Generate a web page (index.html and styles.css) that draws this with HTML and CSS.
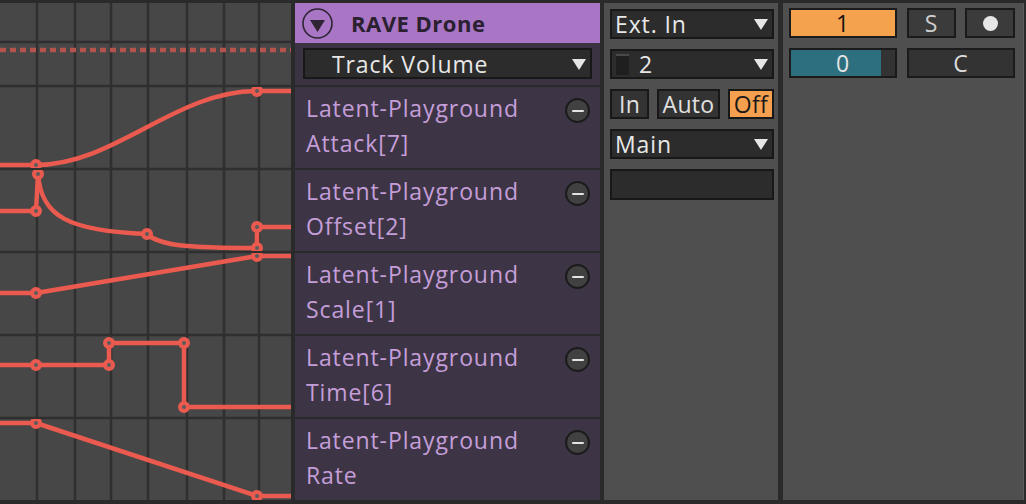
FILE: index.html
```html
<!DOCTYPE html>
<html>
<head>
<meta charset="utf-8">
<link rel="stylesheet" href="styles.css">
</head>
<body>
<div class="app">
  <div class="arrange">
    <svg class="automation" viewBox="0 3 291 497" width="291" height="497">
      <defs>
        <clipPath id="c1"><rect x="0" y="87" width="291" height="81"/></clipPath>
        <clipPath id="c2"><rect x="0" y="170" width="291" height="81"/></clipPath>
        <clipPath id="c3"><rect x="0" y="253" width="291" height="81"/></clipPath>
        <clipPath id="c4"><rect x="0" y="336" width="291" height="81"/></clipPath>
        <clipPath id="c5"><rect x="0" y="419" width="291" height="81"/></clipPath>
      </defs>
      <rect x="0" y="3" width="291" height="497" fill="#474747"/>
      <g class="gridlines">
        <line x1="37" y1="3" x2="37" y2="500"/>
        <line x1="75" y1="3" x2="75" y2="500"/>
        <line x1="111" y1="3" x2="111" y2="500"/>
        <line x1="148" y1="3" x2="148" y2="500"/>
        <line x1="187" y1="3" x2="187" y2="500"/>
        <line x1="224" y1="3" x2="224" y2="500"/>
        <line x1="259" y1="3" x2="259" y2="500"/>
        <line x1="0" y1="42" x2="291" y2="42"/>
        <line x1="0" y1="86" x2="291" y2="86"/>
        <line x1="0" y1="169" x2="291" y2="169"/>
        <line x1="0" y1="252" x2="291" y2="252"/>
        <line x1="0" y1="335" x2="291" y2="335"/>
        <line x1="0" y1="418" x2="291" y2="418"/>
      </g>
      <line class="dashed" x1="0" y1="50" x2="291" y2="50"/>
      <g class="env" clip-path="url(#c1)">
        <path d="M0 165 L36 165 C 115 165, 175 91, 257 91 L291 91"/>
        <circle cx="36" cy="165" r="4"/>
        <circle cx="257" cy="91" r="4"/>
      </g>
      <g class="env" clip-path="url(#c2)">
        <path d="M0 211 L36 211 L38 174 C 41 216, 68 231, 147 234 C 160 246, 190 248, 257 248 L257 227 L291 227"/>
        <circle cx="36" cy="211" r="4"/>
        <circle cx="38" cy="174" r="4"/>
        <circle cx="147" cy="234" r="4"/>
        <circle cx="257" cy="248" r="4"/>
        <circle cx="257" cy="227" r="4"/>
      </g>
      <g class="env" clip-path="url(#c3)">
        <path d="M0 293 L36 293 L257 256 L291 256"/>
        <circle cx="36" cy="293" r="4"/>
        <circle cx="257" cy="256" r="4"/>
      </g>
      <g class="env" clip-path="url(#c4)">
        <path d="M0 365 L109 365 L109 343 L184 343 L184 407 L291 407"/>
        <circle cx="36" cy="365" r="4"/>
        <circle cx="109" cy="365" r="4"/>
        <circle cx="109" cy="343" r="4"/>
        <circle cx="184" cy="343" r="4"/>
        <circle cx="184" cy="407" r="4"/>
      </g>
      <g class="env" clip-path="url(#c5)">
        <path d="M0 423 L36 423 L257 496 L291 496"/>
        <circle cx="36" cy="423" r="4"/>
        <circle cx="257" cy="496" r="4"/>
      </g>
    </svg>
  </div>

  <div class="track">
    <div class="track-top">
      <div class="track-head">
        <svg class="fold" width="31" height="31" viewBox="0 0 31 31">
          <circle cx="15.5" cy="15.5" r="14.5" fill="none" stroke="#2e2433" stroke-width="1.6"/>
          <polygon points="8,12 23,12 15.5,24" fill="#2e2433"/>
        </svg>
        <span class="track-name">RAVE Drone</span>
      </div>
      <div class="selector-row">
        <div class="select wide">
          <span class="select-label">Track Volume</span>
          <span class="tri"></span>
        </div>
      </div>
    </div>
    <div class="lane">
      <div class="lane-name">Latent-Playground<br>Attack[7]</div>
      <span class="minus"></span>
    </div>
    <div class="lane">
      <div class="lane-name">Latent-Playground<br>Offset[2]</div>
      <span class="minus"></span>
    </div>
    <div class="lane">
      <div class="lane-name">Latent-Playground<br>Scale[1]</div>
      <span class="minus"></span>
    </div>
    <div class="lane">
      <div class="lane-name">Latent-Playground<br>Time[6]</div>
      <span class="minus"></span>
    </div>
    <div class="lane">
      <div class="lane-name">Latent-Playground<br>Rate</div>
      <span class="minus"></span>
    </div>
  </div>

  <div class="io">
    <div class="select">
      <span class="select-label">Ext. In</span>
      <span class="tri"></span>
    </div>
    <div class="select">
      <span class="meter"></span>
      <span class="select-label num">2</span>
      <span class="tri"></span>
    </div>
    <div class="monitor">
      <span class="btn in">In</span>
      <span class="btn auto">Auto</span>
      <span class="btn off on">Off</span>
    </div>
    <div class="select">
      <span class="select-label">Main</span>
      <span class="tri"></span>
    </div>
    <div class="select empty"></div>
  </div>

  <div class="mixer">
    <div class="mix-row">
      <span class="box track-num">1</span>
      <span class="box solo">S</span>
      <span class="box arm"><span class="dot"></span></span>
    </div>
    <div class="mix-row">
      <span class="box pan"><span class="pan-fill" style="width:90px"></span><span class="pan-val">0</span></span>
      <span class="box cue">C</span>
    </div>
  </div>
</div>
</body>
</html>
```

FILE: styles.css
```css
* { box-sizing: border-box; }
html, body {
  margin: 0;
  padding: 0;
}
body {
  width: 1026px;
  height: 504px;
  overflow: hidden;
  background: #2a2a2a;
  font-family: "Open Sans", "DejaVu Sans", sans-serif;
  font-size: 23px;
  font-weight: 500;
  letter-spacing: 0.9px;
  color: #e6e6e6;
}
.app {
  display: flex;
  align-items: flex-start;
  padding-top: 3px;
  height: 500px;
}
.arrange {
  width: 291px;
  height: 497px;
  flex: none;
}
.automation { display: block; }
.gridlines line {
  stroke: #2f2f2f;
  stroke-width: 2.5;
}
.dashed {
  stroke: #b4544c;
  stroke-width: 4.5;
  stroke-dasharray: 6 4;
}
.env path {
  fill: none;
  stroke: #eb5a4f;
  stroke-width: 4.5;
  stroke-linejoin: round;
}
.env circle {
  fill: #5b5b5b;
  stroke: #eb5a4f;
  stroke-width: 4;
}

/* track column */
.track {
  width: 305px;
  margin-left: 4px;
  flex: none;
  display: flex;
  flex-direction: column;
  gap: 2px;
  height: 497px;
}
.track-top {
  height: 82px;
  background: #3b3342;
}
.track-head {
  height: 40px;
  background: #a876c4;
  display: flex;
  align-items: center;
  padding-left: 7px;
}
.fold { display: block; flex: none; }
.track-name {
  margin-left: 18px;
  font-weight: 700;
  font-size: 22px;
  letter-spacing: 0.5px;
  color: #2a2030;
}
.selector-row {
  padding: 5px 8px 0 8px;
}
.select {
  position: relative;
  display: flex;
  align-items: center;
  height: 30px;
  background: #2c2c2c;
  border: 2px solid #181818;
  padding-left: 3px;
  color: #e8e8e8;
  line-height: 26px;
}
.select.wide {
  height: 31px;
  padding-left: 27px;
}
.tri {
  position: absolute;
  right: 4px;
  top: 50%;
  margin-top: -5px;
  width: 0;
  height: 0;
  border-left: 7.5px solid transparent;
  border-right: 7.5px solid transparent;
  border-top: 11px solid #e6e6e6;
}
.lane {
  height: 81px;
  background: #3d3546;
  display: flex;
  justify-content: space-between;
  align-items: flex-start;
  padding: 4px 10px 0 11px;
}
.lane-name {
  color: #c59ed9;
  line-height: 35px;
  white-space: nowrap;
}
.minus {
  position: relative;
  margin-top: 7px;
  width: 25px;
  height: 25px;
  border-radius: 50%;
  background: #414141;
  border: 2px solid #1b1b1b;
  flex: none;
}
.minus::after {
  content: "";
  position: absolute;
  left: 4.5px;
  top: 9.5px;
  width: 12px;
  height: 2.6px;
  border-radius: 1px;
  background: #e4e4e4;
}

/* io column */
.io {
  width: 174px;
  margin-left: 4px;
  height: 497px;
  flex: none;
  background: #4f4f4f;
  padding: 6px 4px 0 6px;
  display: flex;
  flex-direction: column;
  gap: 10px;
}
.io .select { height: 30px; }
.meter {
  width: 13px;
  height: 21px;
  background: #1f1f1f;
  border-top: 2px solid #4a4a4a;
  margin-left: 1px;
}
.num { margin-left: 10px; }
.monitor {
  display: flex;
  gap: 8px;
  height: 30px;
}
.btn {
  display: flex;
  align-items: center;
  justify-content: center;
  height: 30px;
  background: #333333;
  border: 2px solid #181818;
  color: #e0e0e0;
  letter-spacing: 0.3px;
}
.btn.in { width: 39px; }
.btn.auto { width: 63px; }
.btn.off { width: 46px; }
.btn.on {
  background: #f5a04e;
  color: #1a1a1a;
}
.select.empty { height: 31px; }

/* mixer column */
.mixer {
  width: 241px;
  margin-left: 5px;
  height: 497px;
  flex: none;
  background: #4f4f4f;
  border-right: 1px solid #5c5c5c;
  padding: 5px 0 0 6px;
  display: flex;
  flex-direction: column;
  gap: 10px;
}
.mix-row {
  display: flex;
  gap: 10px;
}
.box {
  position: relative;
  display: flex;
  align-items: center;
  justify-content: center;
  height: 30px;
  border: 2px solid #1b1b1b;
  background: #333333;
  color: #dcdcdc;
}
.track-num {
  width: 108px;
  background: #f5a24f;
  color: #141414;
}
.solo {
  width: 49px;
  background: #3b3b3b;
  color: #cfcfcf;
}
.arm {
  width: 50px;
  margin-left: -1px;
  background: #3b3b3b;
}
.dot {
  width: 15px;
  height: 15px;
  border-radius: 50%;
  background: #e6e6e6;
}
.pan {
  width: 108px;
  justify-content: flex-start;
  overflow: hidden;
}
.pan-fill {
  position: absolute;
  left: 0;
  top: 0;
  bottom: 0;
  background: #2e6f7f;
}
.pan-val {
  position: relative;
  width: 100%;
  text-align: center;
  color: #e4e4e4;
}
.cue {
  width: 108px;
  color: #dcdcdc;
}
```
